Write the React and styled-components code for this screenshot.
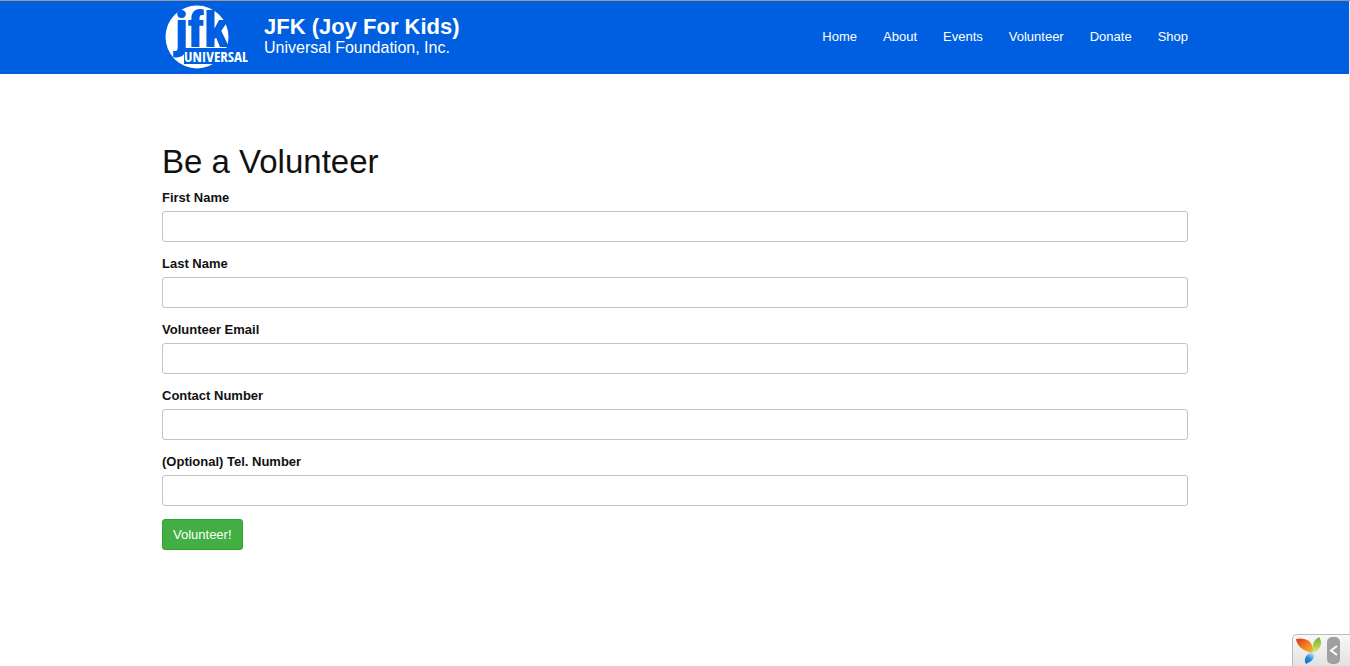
import React from "react";
import styled, { createGlobalStyle } from "styled-components";

const GlobalStyle = createGlobalStyle`
  *, *::before, *::after { box-sizing: border-box; }
  body {
    margin: 0;
    background: #fff;
    color: #111;
    font-family: "Liberation Sans", Arial, sans-serif;
    font-size: 13px;
    line-height: 18px;
  }
`;

const Page = styled.div`
  min-height: 100vh;
  border-top: 1px solid #999;
`;

const Frame = styled.div`
  min-height: calc(100vh - 1px);
  border-right: 1px solid #ececec;
`;

const Header = styled.header`
  background: #005fe0;
  color: #fff;
`;

const Container = styled.div`
  width: 76vw;
  margin-left: 12vw;
`;

const HeaderBar = styled(Container)`
  display: flex;
  align-items: center;
  justify-content: space-between;
  height: 73px;
  padding-bottom: 2px;
`;

const Brand = styled.a`
  display: flex;
  align-items: center;
  gap: 16px;
  color: inherit;
  text-decoration: none;
  white-space: nowrap;
`;

const BrandText = styled.span`
  display: flex;
  flex-direction: column;
`;

const BrandName = styled.strong`
  font-size: 22px;
  line-height: 22px;
`;

const BrandSub = styled.span`
  font-size: 16px;
  line-height: 20px;
`;

const LogoArt = styled.svg`
  display: block;
`;

const Monogram = styled.text`
  fill: #005fe0;
  font: 900 50px "Roboto Condensed", Roboto, sans-serif;
`;

const Wordmark = styled.text`
  fill: #fff;
  font: 700 15px "Open Sans Condensed", "Open Sans", sans-serif;
`;

const Nav = styled.nav`
  display: flex;
  gap: 26px;
`;

const NavLink = styled.a`
  color: #fff;
  text-decoration: none;
`;

const Main = styled(Container).attrs({ as: "main" })`
  padding: 70px 0;
`;

const Title = styled.h1`
  margin: 0 0 9px;
  font-size: 33px;
  font-weight: 400;
  line-height: 36px;
`;

const Form = styled.form`
  display: flex;
  flex-direction: column;
  align-items: flex-start;
  gap: 13px;
`;

const Field = styled.div`
  display: flex;
  flex-direction: column;
  gap: 4px;
  width: 100%;
`;

const Label = styled.label`
  font-weight: 700;
`;

const Input = styled.input`
  width: 100%;
  height: 31px;
  padding: 5px 10px;
  border: 1px solid #c3c3c3;
  border-radius: 3px;
  background: #fff;
  font: inherit;
`;

const SubmitButton = styled.button`
  height: 31px;
  padding: 0 10px;
  border: 1px solid #2da52f;
  border-radius: 3px;
  background: #42ae43;
  color: #fff;
  font: inherit;
  cursor: pointer;
`;

const Toolbar = styled.aside`
  position: fixed;
  right: 0;
  bottom: 0;
  display: flex;
  align-items: flex-start;
  gap: 5px;
  width: 58px;
  height: 32px;
  padding: 2px 0 0 3px;
  border: 1px solid #bbb;
  border-width: 1px 0 0 1px;
  border-radius: 5px 0 0 0;
  background: linear-gradient(#f8f8f8, #e2e2e2);
`;

const ToolbarToggle = styled.button`
  width: 13px;
  height: 27px;
  padding: 0;
  border: 0;
  border-radius: 5px;
  background: #a0a0a0;
  cursor: pointer;

  svg { display: block; }
`;

const Logo = () => (
  <LogoArt width="86" height="67" viewBox="0 0 86 67" role="img" aria-label="JFK Universal">
    <circle cx="35" cy="34" r="31.5" fill="#fff" />
    <Monogram x="13" y="44">jfk</Monogram>
    <path d="M22 45h64v16H22z" fill="#005fe0" />
    <Wordmark x="22" y="59">UNIVERSAL</Wordmark>
  </LogoArt>
);

const YiiLogo = () => (
  <svg width="26" height="28" viewBox="0 0 26 28" aria-hidden="true">
    <defs>
      <linearGradient id="warm" x1="0" y1="0" x2="1" y2="1">
        <stop offset="0" stopColor="#d9321b" />
        <stop offset="0.45" stopColor="#ed7420" />
        <stop offset="1" stopColor="#f8c13b" />
      </linearGradient>
      <linearGradient id="leaf" x1="0" y1="0" x2="0" y2="1">
        <stop offset="0" stopColor="#6db33f" />
        <stop offset="0.5" stopColor="#a9cc3d" />
        <stop offset="1" stopColor="#e4eda0" />
      </linearGradient>
      <linearGradient id="sky" x1="0" y1="1" x2="0.6" y2="0">
        <stop offset="0" stopColor="#1766b5" />
        <stop offset="0.55" stopColor="#2b8edb" />
        <stop offset="1" stopColor="#b9e0f5" />
      </linearGradient>
    </defs>
    <path d="M0 2C8 0 16 3 17 12C17 14 17 15 16 16C8 14 1 10 0 2Z" fill="url(#warm)" />
    <path d="M23 0C27 5 25 12 18 16C17 15 17 14 17 12C16 7 18 3 23 0Z" fill="url(#leaf)" />
    <path d="M17 15C20 20 17 24 10 27C7 22 10 17 17 15Z" fill="url(#sky)" />
  </svg>
);

const links = ["Home", "About", "Events", "Volunteer", "Donate", "Shop"];

const fields = [
  { id: "first-name", label: "First Name", type: "text" },
  { id: "last-name", label: "Last Name", type: "text" },
  { id: "email", label: "Volunteer Email", type: "email" },
  { id: "contact", label: "Contact Number", type: "tel" },
  { id: "telephone", label: "(Optional) Tel. Number", type: "tel" },
];

export default function App() {
  return (
    <Page>
      <GlobalStyle />
      <Frame>
        <Header>
          <HeaderBar>
            <Brand href="#home">
              <Logo />
              <BrandText>
                <BrandName>JFK (Joy For Kids)</BrandName>
                <BrandSub>Universal Foundation, Inc.</BrandSub>
              </BrandText>
            </Brand>
            <Nav>
              {links.map((link) => (
                <NavLink key={link} href={`#${link.toLowerCase()}`}>{link}</NavLink>
              ))}
            </Nav>
          </HeaderBar>
        </Header>
        <Main>
          <Title>Be a Volunteer</Title>
          <Form onSubmit={(event) => event.preventDefault()}>
            {fields.map(({ id, label, type }) => (
              <Field key={id}>
                <Label htmlFor={id}>{label}</Label>
                <Input id={id} name={id} type={type} />
              </Field>
            ))}
            <SubmitButton type="submit">Volunteer!</SubmitButton>
          </Form>
        </Main>
      </Frame>
      <Toolbar>
        <YiiLogo />
        <ToolbarToggle type="button" aria-label="Open debug toolbar">
          <svg width="13" height="27" viewBox="0 0 13 27" fill="none" stroke="#fff" strokeWidth="2">
            <path d="M10 9L4 13.5L10 18" />
          </svg>
        </ToolbarToggle>
      </Toolbar>
    </Page>
  );
}
